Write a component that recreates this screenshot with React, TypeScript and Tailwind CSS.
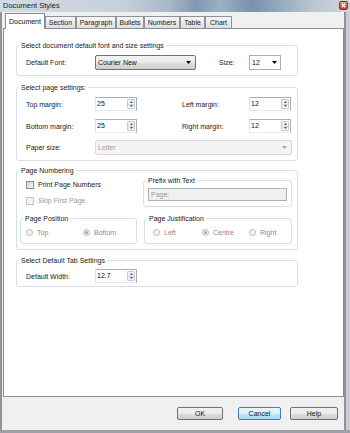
import React from "react";

function Group({
  title,
  className,
  innerClass,
  children,
}: {
  title: string;
  className: string;
  innerClass: string;
  children?: React.ReactNode;
}) {
  return (
    <fieldset className={`m-0 p-0 min-w-0 border border-[#d5dfe5] rounded-[3px] ${className}`}>
      <legend className="ml-[2px] px-[2px] h-[9px] leading-[9px] text-[7px] text-[#1a1a1a]">{title}</legend>
      <div className={innerClass}>{children}</div>
    </fieldset>
  );
}

function DownArrow({ color = "#000" }: { color?: string }) {
  return (
    <svg width="5" height="3" viewBox="0 0 5 3">
      <path d="M0 0H5L2.5 3Z" fill={color} />
    </svg>
  );
}

function Spin({ value }: { value: string }) {
  return (
    <div className="flex w-[42px] h-[14px] border border-[#abadb3] border-l-[#e2e3ea] border-b-[#e3e9ef] bg-white">
      <div className="flex-1 pl-[1px] leading-[12px] text-[7px] text-[#111]">{value}</div>
      <div className="w-[8px] my-[1px] mr-[1px] flex flex-col border border-[#c5ccd6] rounded-[1px] bg-[#eef1f6]">
        <div className="flex-1 flex items-center justify-center border-b border-[#cfd5dd]">
          <svg width="3" height="2" viewBox="0 0 3 2">
            <path d="M0 2H3L1.5 0Z" fill="#4a5a78" />
          </svg>
        </div>
        <div className="flex-1 flex items-center justify-center">
          <svg width="3" height="2" viewBox="0 0 3 2">
            <path d="M0 0H3L1.5 2Z" fill="#4a5a78" />
          </svg>
        </div>
      </div>
    </div>
  );
}

function Radio({ label, checked, width }: { label: string; checked?: boolean; width: string }) {
  return (
    <div className={`flex items-center gap-[4px] ${width}`}>
      <span className="w-[7px] h-[7px] rounded-full border border-[#b9b9b9] bg-[#f3f3f3] flex items-center justify-center">
        {checked ? <span className="w-[3px] h-[3px] rounded-full bg-[#a4a4a4]" /> : null}
      </span>
      <span className="text-[#8a8a8a] leading-[9px]">{label}</span>
    </div>
  );
}

const tabs: { name: string; w: string }[] = [
  { name: "Section", w: "w-[31px]" },
  { name: "Paragraph", w: "w-[40px]" },
  { name: "Bullets", w: "w-[28px]" },
  { name: "Numbers", w: "w-[36px]" },
  { name: "Table", w: "w-[25px]" },
  { name: "Chart", w: "w-[27px]" },
];

export default function App() {
  return (
    <div className="w-[350px] h-[433px] flex flex-col bg-[#b3bcc6] font-['Liberation_Sans',Arial,sans-serif] text-[7px] leading-[9px] text-[#1a1a1a] overflow-hidden">
      {/* title bar */}
      <div className="h-[12px] flex items-start bg-[linear-gradient(90deg,#d2dae2_0%,#c7d1db_35%,#a9b8c9_48%,#8298b2_56%,#9cb0c5_63%,#7a91ac_72%,#96aabf_80%,#bcc7d3_90%,#cfd6de_100%)]">
        <span className="pl-[3px] leading-[12px] text-[7.5px] text-[#1c1c1c]">Document Styles</span>
        <div className="ml-auto mr-[2px] mt-[1px] w-[9px] h-[9px] rounded-[2px] border border-[#8a3326] bg-[linear-gradient(180deg,#eba190_0%,#d5604d_50%,#c2402e_100%)] flex items-center justify-center">
          <svg width="5" height="5" viewBox="0 0 5 5">
            <path d="M0.8 0.8L4.2 4.2M4.2 0.8L0.8 4.2" stroke="#fff" strokeWidth="1.3" />
          </svg>
        </div>
      </div>

      <div className="flex-1 flex">
        <div className="w-[2px] bg-[#8f9399]" />
        <div className="w-[342px] flex flex-col bg-[#f0f0f0]">
          {/* tabs */}
          <div className="h-[16px] flex items-end pl-[3px] relative z-10">
            <div className="w-[40px] h-[16px] -mb-px bg-white border border-[#898c95] border-b-0 flex items-start justify-center pt-[3px] text-[#111]">
              Document
            </div>
            {tabs.map((t) => (
              <div
                key={t.name}
                className={`${t.w} h-[12px] bg-[linear-gradient(180deg,#f5f5f5_0%,#ebebeb_50%,#dedede_100%)] border border-[#8f9197] border-b-0 flex items-center justify-center text-[#1a1a1a]`}
              >
                {t.name}
              </div>
            ))}
          </div>

          {/* panel */}
          <div className="ml-[1px] h-[369px] bg-white border border-[#898c95] flex flex-col pl-[12px]">
            {/* group 1 */}
            <Group
              title="Select document default font and size settings"
              className="mt-[12px] w-[282px]"
              innerClass="pt-[5px] pb-[5px] pl-[9px] flex items-center h-[25px]"
            >
              <span className="w-[69px]">Default Font:</span>
              <div className="w-[101px] h-[15px] rounded-[2px] border border-[#707070] bg-[linear-gradient(180deg,#f3f3f3_0%,#ebebeb_50%,#dddddd_51%,#d0d0d0_100%)] flex items-center pl-[2px] pr-[4px]">
                <span className="flex-1 text-[#111]">Courier New</span>
                <DownArrow />
              </div>
              <span className="ml-[23px] w-[30px]">Size:</span>
              <div className="w-[32px] h-[15px] border border-[#abadb3] bg-white flex items-center pl-[2px] pr-[3px]">
                <span className="flex-1 text-[#111]">12</span>
                <DownArrow />
              </div>
            </Group>

            {/* group 2 */}
            <Group
              title="Select page settings:"
              className="mt-[7px] w-[282px]"
              innerClass="pt-[5px] pb-[5px] pl-[9px] flex flex-col"
            >
              <div className="flex items-center h-[14px]">
                <span className="w-[69px]">Top margin:</span>
                <Spin value="25" />
                <span className="ml-[45px] w-[67px]">Left margin:</span>
                <Spin value="12" />
              </div>
              <div className="flex items-center h-[14px] mt-[8px]">
                <span className="w-[69px]">Bottom margin:</span>
                <Spin value="25" />
                <span className="ml-[45px] w-[67px]">Right margin:</span>
                <Spin value="12" />
              </div>
              <div className="flex items-center h-[15px] mt-[7px]">
                <span className="w-[69px]">Paper size:</span>
                <div className="w-[197px] h-[15px] border border-[#d9d9d9] rounded-[2px] bg-[#f4f4f4] flex items-center pl-[2px] pr-[4px]">
                  <span className="flex-1 text-[#a3a3a3]">Letter</span>
                  <DownArrow color="#a8a8a8" />
                </div>
              </div>
            </Group>

            {/* group 3 */}
            <Group
              title="Page Numbering"
              className="mt-[5px] w-[282px]"
              innerClass="pb-[5px] flex flex-col"
            >
              <div className="flex h-[32px]">
                <div className="w-[126px] pl-[9px] pt-[5px] flex flex-col">
                  <div className="flex items-center h-[9px] gap-[4px]">
                    <span className="w-[8px] h-[8px] border border-[#8e8f8f] bg-[linear-gradient(135deg,#cfcfcf_0%,#e9e9e9_60%,#f7f7f7_100%)]" />
                    <span className="text-[#1a1a1a]">Print Page Numbers</span>
                  </div>
                  <div className="flex items-center h-[9px] gap-[4px] mt-[7px]">
                    <span className="w-[8px] h-[8px] border border-[#c4c4c4] bg-[#f3f3f3]" />
                    <span className="text-[#9a9a9a]">Skip First Page</span>
                  </div>
                </div>
                <Group
                  title="Prefix with Text"
                  className="mt-[1px] w-[149px] h-[31px]"
                  innerClass="pt-[3px] pl-[4px]"
                >
                  <div className="w-[139px] h-[13px] border border-[#adb2b5] bg-[#f0f0f0] pl-[2px] leading-[11px] text-[#9a9a9a]">
                    Page:
                  </div>
                </Group>
              </div>
              <div className="flex mt-[7px] pl-[3px] gap-[7px]">
                <Group
                  title="Page Position"
                  className="w-[117px]"
                  innerClass="pt-[5px] pb-[6px] pl-[5px] flex items-center h-[20px]"
                >
                  <Radio label="Top" width="w-[57px]" />
                  <Radio label="Bottom" checked width="w-[45px]" />
                </Group>
                <Group
                  title="Page Justification"
                  className="w-[148px]"
                  innerClass="pt-[5px] pb-[6px] pl-[8px] flex items-center h-[20px]"
                >
                  <Radio label="Left" width="w-[49px]" />
                  <Radio label="Centre" checked width="w-[47px]" />
                  <Radio label="Right" width="w-[36px]" />
                </Group>
              </div>
            </Group>

            {/* group 4 */}
            <Group
              title="Select Default Tab Settings"
              className="mt-[6px] w-[282px]"
              innerClass="pt-[4px] pb-[3px] pl-[9px] flex items-center h-[21px]"
            >
              <span className="w-[69px]">Default Width:</span>
              <Spin value="12.7" />
            </Group>
          </div>

          {/* buttons */}
          <div className="flex-1 flex items-start pt-[10px] pl-[175px]">
            <button className="w-[46px] h-[13px] rounded-[2px] border border-[#707070] bg-[linear-gradient(180deg,#f2f2f2_0%,#ebebeb_50%,#dddddd_51%,#cfcfcf_100%)] text-[7px] leading-[11px] text-[#111] font-['Liberation_Sans',Arial,sans-serif]">
              OK
            </button>
            <button className="ml-[15px] w-[43px] h-[13px] rounded-[2px] border border-[#3c7fb1] bg-[linear-gradient(180deg,#eaf6fd_0%,#d9f0fc_50%,#bee6fd_51%,#a7d9f5_100%)] text-[7px] leading-[11px] text-[#111] font-['Liberation_Sans',Arial,sans-serif]">
              Cancel
            </button>
            <button className="ml-[9px] w-[48px] h-[13px] rounded-[2px] border border-[#707070] bg-[linear-gradient(180deg,#f2f2f2_0%,#ebebeb_50%,#dddddd_51%,#cfcfcf_100%)] text-[7px] leading-[11px] text-[#111] font-['Liberation_Sans',Arial,sans-serif]">
              Help
            </button>
          </div>
        </div>
        <div className="w-[6px] border-l-2 border-[#8f9399] bg-[#c9cdd2]" />
      </div>
      <div className="h-[3px] bg-[#9da2a8]" />
    </div>
  );
}
